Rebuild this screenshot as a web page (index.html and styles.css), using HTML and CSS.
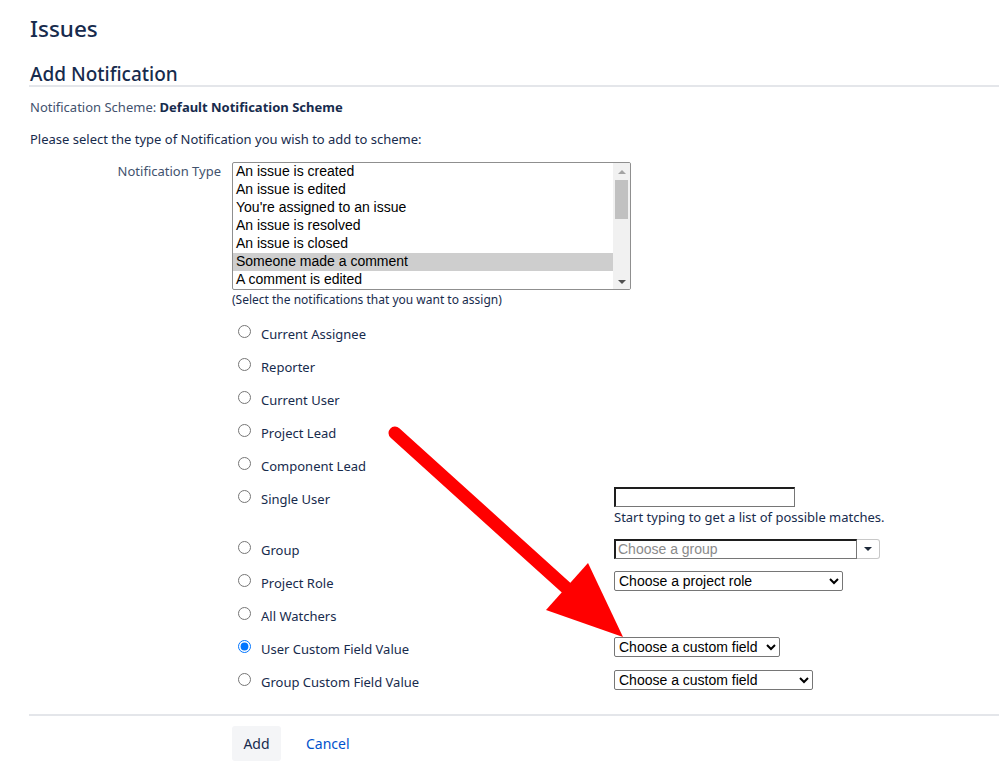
FILE: index.html
```html
<!DOCTYPE html>
<html>
<head>
<meta charset="utf-8">
<title>Add Notification</title>
<link rel="stylesheet" href="styles.css">
</head>
<body>
<div class="page">
  <h1 class="title">Issues</h1>
  <h2 class="subtitle">Add Notification</h2>
  <p class="scheme">Notification Scheme: <strong>Default Notification Scheme</strong></p>
  <p class="intro">Please select the type of Notification you wish to add to scheme:</p>

  <div class="form-row">
    <div class="field-label">Notification Type</div>
    <div class="field">
      <div class="listbox">
        <div class="options">
          <div class="option">An issue is created</div>
          <div class="option">An issue is edited</div>
          <div class="option">You're assigned to an issue</div>
          <div class="option">An issue is resolved</div>
          <div class="option">An issue is closed</div>
          <div class="option selected">Someone made a comment</div>
          <div class="option">A comment is edited</div>
        </div>
        <div class="scrollbar">
          <div class="sb-up"></div>
          <div class="sb-track"><div class="sb-thumb"></div></div>
          <div class="sb-down"></div>
        </div>
      </div>
      <div class="hint">(Select the notifications that you want to assign)</div>

      <div class="radios">
        <div class="radio-row"><label class="radio-label"><input type="radio" name="t"><span>Current Assignee</span></label><div class="ctrl"></div></div>
        <div class="radio-row"><label class="radio-label"><input type="radio" name="t"><span>Reporter</span></label><div class="ctrl"></div></div>
        <div class="radio-row"><label class="radio-label"><input type="radio" name="t"><span>Current User</span></label><div class="ctrl"></div></div>
        <div class="radio-row"><label class="radio-label"><input type="radio" name="t"><span>Project Lead</span></label><div class="ctrl"></div></div>
        <div class="radio-row"><label class="radio-label"><input type="radio" name="t"><span>Component Lead</span></label><div class="ctrl"></div></div>
        <div class="radio-row tall"><label class="radio-label"><input type="radio" name="t"><span>Single User</span></label>
          <div class="ctrl">
            <input class="text-input" type="text">
            <div class="ctrl-hint">Start typing to get a list of possible matches.</div>
          </div>
        </div>
        <div class="radio-row"><label class="radio-label"><input type="radio" name="t"><span>Group</span></label>
          <div class="ctrl">
            <div class="group-picker">
              <div class="group-input">Choose a group</div>
              <div class="group-btn"><span class="caret"></span></div>
            </div>
          </div>
        </div>
        <div class="radio-row"><label class="radio-label"><input type="radio" name="t"><span>Project Role</span></label>
          <div class="ctrl"><select class="sel sel-role"><option>Choose a project role</option></select></div>
        </div>
        <div class="radio-row"><label class="radio-label"><input type="radio" name="t"><span>All Watchers</span></label><div class="ctrl"></div></div>
        <div class="radio-row"><label class="radio-label"><input type="radio" name="t" checked><span>User Custom Field Value</span></label>
          <div class="ctrl"><select class="sel sel-ucf"><option>Choose a custom field</option></select></div>
        </div>
        <div class="radio-row"><label class="radio-label"><input type="radio" name="t"><span>Group Custom Field Value</span></label>
          <div class="ctrl"><select class="sel sel-gcf"><option>Choose a custom field</option></select></div>
        </div>
      </div>
    </div>
  </div>

  <div class="buttons">
    <button class="btn-add">Add</button>
    <a class="cancel" href="#">Cancel</a>
  </div>
</div>

<svg class="arrow" width="999" height="773" viewBox="0 0 999 773">
  <line x1="395" y1="433" x2="572" y2="593" stroke="#ff0000" stroke-width="13" stroke-linecap="round"/>
  <polygon points="588,563 546,610 623,637" fill="#ff0000"/>
</svg>
</body>
</html>
```

FILE: styles.css
```css
html, body {
  margin: 0;
  padding: 0;
  background: #ffffff;
}
body {
  position: relative;
  width: 999px;
  height: 773px;
  overflow: hidden;
  font-family: "Noto Sans", "Open Sans", sans-serif;
  color: #172b4d;
}
.page {
  margin-left: 29px;
}
.title {
  margin: 13px 0 0 1px;
  font-size: 22.5px;
  line-height: 32px;
  font-weight: 500;
  color: #172b4d;
}
.subtitle {
  margin: 18px 0 0 0;
  padding-left: 1px;
  font-size: 19px;
  line-height: 22px;
  font-weight: 500;
  color: #172b4d;
  border-bottom: 2px solid #e4e6ea;
}
.scheme {
  margin: 10px 0 0 1px;
  font-size: 13px;
  line-height: 20px;
  color: #42526e;
}
.scheme strong {
  color: #172b4d;
  font-weight: 700;
}
.intro {
  margin: 12px 0 0 1px;
  font-size: 13px;
  line-height: 20px;
  color: #172b4d;
}
.form-row {
  margin-top: 13px;
  display: grid;
  grid-template-columns: 193px 1fr;
  column-gap: 10px;
  align-items: start;
}
.field-label {
  margin-top: -1px;
  text-align: right;
  font-size: 13px;
  line-height: 20px;
  color: #42526e;
  padding-right: 1px;
}
.field {
  display: flex;
  flex-direction: column;
  align-items: flex-start;
}
.listbox {
  width: 397px;
  height: 126px;
  border: 1px solid #8f8f8f;
  border-radius: 2px;
  display: flex;
  overflow: hidden;
  font-family: "Liberation Sans", Arial, sans-serif;
  font-size: 14px;
  color: #000;
}
.options {
  flex: 1;
}
.option {
  height: 18px;
  line-height: 16px;
  padding-left: 3px;
  white-space: nowrap;
}
.option.selected {
  background: #cecece;
}
.scrollbar {
  width: 17px;
  background: #f1f1f1;
  display: flex;
  flex-direction: column;
  align-items: center;
}
.sb-up, .sb-down {
  height: 17px;
  width: 17px;
  display: flex;
  align-items: center;
  justify-content: center;
}
.sb-up::after {
  content: "";
  border-left: 4px solid transparent;
  border-right: 4px solid transparent;
  border-bottom: 4px solid #a3a3a3;
  margin-top: 1px;
}
.sb-down::after {
  content: "";
  border-left: 4px solid transparent;
  border-right: 4px solid transparent;
  border-top: 4px solid #505050;
  margin-top: 2px;
}
.sb-track {
  flex: 1;
  width: 17px;
  display: flex;
  justify-content: center;
}
.sb-thumb {
  width: 13px;
  height: 39px;
  background: #c1c1c1;
}
.hint {
  margin-top: 2px;
  font-size: 12px;
  line-height: 16px;
  color: #172b4d;
}
.radios {
  margin-top: 9px;
  width: 100%;
}
.radio-row {
  display: grid;
  grid-template-columns: 382px 1fr;
  height: 33px;
}
.radio-row.tall {
  height: 51px;
}
.radio-label {
  height: 33px;
  display: flex;
  align-items: center;
  font-size: 13px;
  line-height: 20px;
  color: #172b4d;
}
.radio-label input {
  margin: 0 10px 5px 6px;
  width: 13px;
  height: 13px;
}
.ctrl {
  padding-top: 5px;
}
.text-input {
  box-sizing: border-box;
  width: 181px;
  height: 20px;
  margin: 0;
  padding: 0 2px;
  border: 1px solid #767676;
  border-top: 2px solid #1e1e1e;
  border-left: 2px solid #1e1e1e;
  background: #fff;
  display: block;
}
.ctrl-hint {
  font-size: 13px;
  line-height: 18px;
  color: #172b4d;
  margin-top: 1px;
  white-space: nowrap;
}
.group-picker {
  margin-top: 1px;
  display: flex;
  width: 266px;
  height: 20px;
  font-family: "Liberation Sans", Arial, sans-serif;
  font-size: 14px;
}
.group-input {
  box-sizing: border-box;
  width: 243px;
  height: 20px;
  border: 1px solid #767676;
  border-top: 2px solid #1e1e1e;
  border-left: 2px solid #1e1e1e;
  color: #8a8a8a;
  line-height: 17px;
  padding-left: 2px;
  white-space: nowrap;
}
.group-btn {
  box-sizing: border-box;
  width: 23px;
  height: 20px;
  border: 1px solid #c8c8c8;
  border-left: none;
  border-radius: 0 3px 3px 0;
  display: flex;
  align-items: center;
  justify-content: center;
  background: #fff;
}
.caret {
  width: 0;
  height: 0;
  border-left: 4px solid transparent;
  border-right: 4px solid transparent;
  border-top: 4px solid #1e2a3a;
}
.sel {
  display: block;
  height: 20px;
  margin: 0;
  font-family: "Liberation Sans", Arial, sans-serif;
  font-size: 14px;
  color: #000;
  background: #fff;
  border: 1px solid #767676;
  border-radius: 2px;
}
.sel-role {
  width: 229px;
}
.sel-ucf {
  width: 166px;
}
.sel-gcf {
  width: 199px;
}
.buttons {
  margin-top: 16px;
  border-top: 2px solid #e4e6ea;
  padding: 10px 0 0 203px;
  display: flex;
  align-items: center;
  gap: 25px;
}
.btn-add {
  width: 49px;
  height: 35px;
  border: none;
  border-radius: 3px;
  background: #f4f5f7;
  color: #172b4d;
  font-family: "Noto Sans", "Open Sans", sans-serif;
  font-size: 14px;
  padding: 0;
}
.cancel {
  color: #0052cc;
  text-decoration: none;
  font-size: 14px;
}
.arrow {
  position: absolute;
  left: 0;
  top: 0;
  pointer-events: none;
}
```
